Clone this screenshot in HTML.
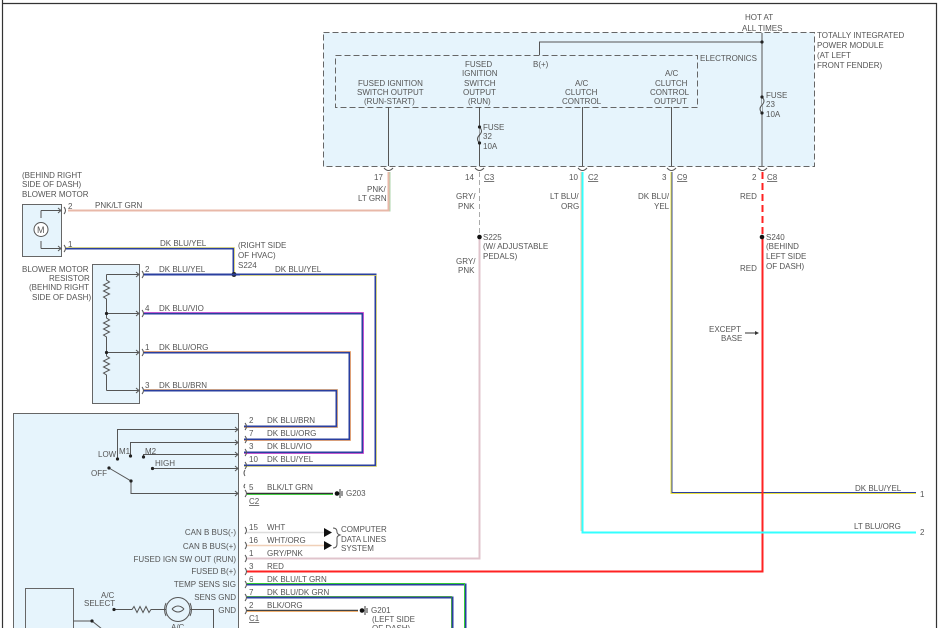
<!DOCTYPE html>
<html><head><meta charset="utf-8"><style>
html,body{margin:0;padding:0;background:#fff;}
svg{display:block;}
text{font-family:"Liberation Sans",sans-serif;font-size:8px;fill:#555;}
</style></head><body>
<svg width="941" height="628" viewBox="0 0 941 628" xmlns="http://www.w3.org/2000/svg">
<path d="M2.5 0V628M2.5 3.5H936.5V628" stroke="#333" stroke-width="1.2" fill="none"/>

<rect x="323.5" y="32.5" width="491" height="134" fill="#e6f4fc" stroke="#666" stroke-dasharray="6,3"/>
<rect x="335.5" y="55.5" width="362" height="52" fill="none" stroke="#666" stroke-dasharray="6,3"/>
<text x="745" y="20">HOT AT</text>
<text x="742" y="31">ALL TIMES</text>
<text x="817" y="38">TOTALLY INTEGRATED</text>
<text x="817" y="48">POWER MODULE</text>
<text x="817" y="58">(AT LEFT</text>
<text x="817" y="68">FRONT FENDER)</text>
<text x="700" y="61">ELECTRONICS</text>
<text x="358" y="86">FUSED IGNITION</text>
<text x="357" y="95">SWITCH OUTPUT</text>
<text x="364" y="104">(RUN-START)</text>
<text x="465" y="67">FUSED</text>
<text x="462" y="76">IGNITION</text>
<text x="464" y="86">SWITCH</text>
<text x="463" y="95">OUTPUT</text>
<text x="468" y="104">(RUN)</text>
<text x="533" y="67">B(+)</text>
<text x="575" y="86">A/C</text>
<text x="565" y="95">CLUTCH</text>
<text x="562" y="104">CONTROL</text>
<text x="665" y="76">A/C</text>
<text x="655" y="86">CLUTCH</text>
<text x="650" y="95">CONTROL</text>
<text x="654" y="104">OUTPUT</text>
<g stroke="#555" fill="none">
<path d="M762 33V166M762 42H539.5V55M388.5 107V166M479.5 107V166M582.5 107V166M671.5 107V166"/>
<path d="M762 97q4 4 0 8q-4 4 0 8" fill="#e6f4fc"/>
<path d="M479.5 127q4 4 0 8q-4 4 0 8" fill="#e6f4fc"/>
</g>
<g fill="#222"><circle cx="762" cy="42" r="1.6"/><circle cx="762" cy="97" r="1.6"/><circle cx="762" cy="113" r="1.6"/><circle cx="479.5" cy="127" r="1.6"/><circle cx="479.5" cy="143" r="1.6"/></g>
<text x="766" y="98">FUSE</text><text x="766" y="107">23</text><text x="766" y="117">10A</text>
<text x="483" y="130">FUSE</text><text x="483" y="139">32</text><text x="483" y="149">10A</text>
<g stroke="#555" fill="none">
<path d="M384 168q4.5 5 9 0M475 168q4.5 5 9 0M578 168q4.5 5 9 0M667 168q4.5 5 9 0M758 168q4.5 5 9 0"/>
</g>
<text x="374" y="180">17</text><text x="465" y="180">14</text><text x="484" y="180" text-decoration="underline">C3</text>
<text x="569" y="180">10</text><text x="588" y="180" text-decoration="underline">C2</text>
<text x="662" y="180">3</text><text x="677" y="180" text-decoration="underline">C9</text>
<text x="752" y="180">2</text><text x="767" y="180" text-decoration="underline">C8</text>
<text x="367" y="192">PNK/</text><text x="358" y="201">LT GRN</text>
<text x="456" y="199">GRY/</text><text x="458" y="209">PNK</text>
<text x="550" y="199">LT BLU/</text><text x="561" y="209">ORG</text>
<text x="638" y="199">DK BLU/</text><text x="654" y="209">YEL</text>
<text x="740" y="199">RED</text>

<path d="M388.5 172V210.5H68" stroke="#e8b8a8" stroke-width="2" fill="none"/>
<path d="M390 172V211.5" stroke="#9c9" stroke-width="0.8"/>
<text x="95" y="208">PNK/LT GRN</text>

<text x="22" y="178">(BEHIND RIGHT</text><text x="22" y="187">SIDE OF DASH)</text><text x="22" y="197">BLOWER MOTOR</text>
<rect x="22.5" y="204.5" width="39" height="52" fill="#e6f4fc" stroke="#666"/>
<g stroke="#555" fill="none"><path d="M41 210.5V218M41 241V248.5M41 210.5H60M41 248.5H60M58 208l3 2.5-3 2.5M58 246l3 2.5-3 2.5M64 207q3 3.5 0 7M64 245q3 3.5 0 7"/>
<circle cx="41" cy="229.5" r="7" fill="#fff"/></g>
<text x="37" y="233" style="font-size:9px">M</text>
<text x="68" y="209">2</text><text x="68" y="247">1</text>

<path d="M66 248.5H233.5V274" stroke="#2a3f9f" stroke-width="2" fill="none"/>
<path d="M66 247.5H234.5V274" stroke="#e8e070" stroke-width="0.8" fill="none"/>
<text x="160" y="246">DK BLU/YEL</text>
<text x="238" y="248">(RIGHT SIDE</text><text x="238" y="258">OF HVAC)</text><text x="238" y="268">S224</text>

<text x="22" y="272">BLOWER MOTOR</text><text x="49" y="281">RESISTOR</text><text x="29" y="290">(BEHIND RIGHT</text><text x="32" y="300">SIDE OF DASH)</text>
<rect x="92.5" y="264.5" width="47" height="139" fill="#e6f4fc" stroke="#666"/>
<g stroke="#555" fill="none">
<path d="M106.5 274.5V280l3 2-6 3 6 3-6 3 6 3-6 3 3 2V318l3 2-6 3 6 3-6 3 6 3-6 3 3 2V356l3 2-6 3 6 3-6 3 6 3-6 3 3 2V390.5"/>
<path d="M106.5 274.5H138M106.5 313.5H138M106.5 352.5H138M106.5 390.5H138"/>
<path d="M136 272l3 2.5-3 2.5M136 311l3 2.5-3 2.5M136 350l3 2.5-3 2.5M136 388l3 2.5-3 2.5"/>
<path d="M142 271q3 3.5 0 7M142 310q3 3.5 0 7M142 349q3 3.5 0 7M142 387q3 3.5 0 7"/>
</g>
<g fill="#222"><circle cx="106.5" cy="313.5" r="1.6"/><circle cx="106.5" cy="352.5" r="1.6"/><circle cx="234" cy="274.5" r="2.5"/></g>
<text x="145" y="272">2</text><text x="145" y="311">4</text><text x="145" y="350">1</text><text x="145" y="388">3</text>
<text x="159" y="272">DK BLU/YEL</text><text x="159" y="311">DK BLU/VIO</text><text x="159" y="350">DK BLU/ORG</text><text x="159" y="388">DK BLU/BRN</text>
<text x="275" y="272">DK BLU/YEL</text>

<g fill="none" stroke="#2a3f9f" stroke-width="2">
<path d="M144 274.5H375.5V465.5H244"/>
<path d="M144 313.5H362.5V452.5H244"/>
<path d="M144 352.5H349.5V439.5H244"/>
<path d="M144 390.5H336.5V426.5H244"/>
</g>
<g fill="none" stroke-width="0.8">
<path d="M240 275.5H376.5V466.5H244" stroke="#e8e070"/>
<path d="M144 312.5H363.5V453.5H244" stroke="#d040d0"/>
<path d="M144 351.5H350.5V440.5H244" stroke="#f0a060"/>
<path d="M144 389.5H337.5V427.5H244" stroke="#d8a070"/>
</g>

<rect x="13.5" y="413.5" width="225" height="220" fill="#e6f4fc" stroke="#666"/>
<g stroke="#555" fill="none">
<path d="M117.5 459V429.5H238M130.5 456V442.5H238M143.5 457V454.5H238M152.5 468.5H238M109 468l22 13V493.5H238"/>
<path d="M235 427l3 2.5-3 2.5M235 440l3 2.5-3 2.5M235 452l3 2.5-3 2.5M235 466l3 2.5-3 2.5M235 491l3 2.5-3 2.5"/>
<path d="M245 423q3 3.5 0 7M245 436q3 3.5 0 7M245 449q3 3.5 0 7M245 462q3 3.5 0 7M245 490q3 3.5 0 7M245 470q-2 3 0 6M245 484q-2 3 0 4"/>
<path d="M245 527q3 3.5 0 7M245 542q3 3.5 0 7M245 555q3 3.5 0 7M245 568q3 3.5 0 7M245 581q3 3.5 0 7M245 594q3 3.5 0 7M245 607q3 3.5 0 7"/>
</g>
<g fill="#222"><circle cx="117.5" cy="459" r="1.6"/><circle cx="130.5" cy="456" r="1.6"/><circle cx="143.5" cy="457" r="1.6"/><circle cx="152.5" cy="468.5" r="1.6"/><circle cx="109" cy="468" r="1.6"/><circle cx="131" cy="481" r="1.6"/></g>
<text x="98" y="457">LOW</text><text x="119" y="454">M1</text><text x="145" y="454">M2</text><text x="155" y="466">HIGH</text><text x="91" y="476">OFF</text>

<text x="249" y="423">2</text><text x="249" y="436">7</text><text x="249" y="449">3</text><text x="249" y="462">10</text><text x="249" y="490">5</text>
<text x="267" y="423">DK BLU/BRN</text><text x="267" y="436">DK BLU/ORG</text><text x="267" y="449">DK BLU/VIO</text><text x="267" y="462">DK BLU/YEL</text><text x="267" y="490">BLK/LT GRN</text>
<text x="249" y="504" text-decoration="underline">C2</text>
<path d="M247 493.5H333" stroke="#333" stroke-width="1.5"/>
<path d="M247 494.5H333" stroke="#4c4" stroke-width="1"/>
<circle cx="337" cy="493.5" r="2.3" fill="#111"/><path d="M340 489v9M342 491v5" stroke="#333"/>
<text x="346" y="496">G203</text>

<text x="236" y="535" text-anchor="end">CAN B BUS(-)</text>
<text x="236" y="549" text-anchor="end">CAN B BUS(+)</text>
<text x="236" y="562" text-anchor="end">FUSED IGN SW OUT (RUN)</text>
<text x="236" y="574" text-anchor="end">FUSED B(+)</text>
<text x="236" y="587" text-anchor="end">TEMP SENS SIG</text>
<text x="236" y="600" text-anchor="end">SENS GND</text>
<text x="236" y="613" text-anchor="end">GND</text>
<text x="249" y="530">15</text><text x="249" y="543">16</text><text x="249" y="556">1</text><text x="249" y="569">3</text><text x="249" y="582">6</text><text x="249" y="595">7</text><text x="249" y="608">2</text>
<text x="267" y="530">WHT</text><text x="267" y="543">WHT/ORG</text><text x="267" y="556">GRY/PNK</text><text x="267" y="569">RED</text><text x="267" y="582">DK BLU/LT GRN</text><text x="267" y="595">DK BLU/DK GRN</text><text x="267" y="608">BLK/ORG</text>
<text x="249" y="621" text-decoration="underline">C1</text>
<path d="M247 532.5H324" stroke="#ddd" stroke-width="1.5"/>
<path d="M247 545.5H324" stroke="#f0d0b8" stroke-width="1.5"/>
<path d="M324 528l8 4.5-8 4.5zM324 541l8 4.5-8 4.5z" fill="#111"/>
<path d="M333 528q4 0 4 4q0 2 3 3q-3 1-3 3v6q0 4-4 4" stroke="#555" fill="none"/>
<text x="341" y="532">COMPUTER</text><text x="341" y="542">DATA LINES</text><text x="341" y="551">SYSTEM</text>

<path d="M479.5 172V237" stroke="#aaa" stroke-dasharray="5,3" fill="none"/>
<path d="M247 558.5H479.5V237" stroke="#e0c4cc" stroke-width="2" fill="none"/>
<circle cx="479.5" cy="237" r="2.3" fill="#111"/>
<text x="483" y="240">S225</text><text x="483" y="249">(W/ ADJUSTABLE</text><text x="483" y="259">PEDALS)</text>
<text x="456" y="264">GRY/</text><text x="458" y="273">PNK</text>

<path d="M762.5 172V237" stroke="#f22" stroke-width="2" stroke-dasharray="7,4" fill="none"/>
<path d="M247 571.5H762.5V237" stroke="#f22" stroke-width="2" fill="none"/>
<circle cx="762" cy="237" r="2.3" fill="#111"/>
<text x="766" y="240">S240</text><text x="766" y="249">(BEHIND</text><text x="766" y="259">LEFT SIDE</text><text x="766" y="269">OF DASH)</text>
<text x="740" y="271">RED</text>
<text x="709" y="332">EXCEPT</text><text x="721" y="341">BASE</text>
<path d="M745 333H757" stroke="#333"/><path d="M755 331l4 2-4 2z" fill="#333"/>

<path d="M582.5 172V532.5H916" stroke="#3ff" stroke-width="2" fill="none"/>
<path d="M581 172V531" stroke="#f0b080" stroke-width="0.7"/>
<text x="854" y="529">LT BLU/ORG</text><text x="920" y="535">2</text>
<path d="M671.5 172V493H916" stroke="#e8e040" stroke-width="2" fill="none"/>
<path d="M672 172V492.5H916" stroke="#2a3f9f" stroke-width="0.9" fill="none"/>
<text x="855" y="491">DK BLU/YEL</text><text x="920" y="497">1</text>
<path d="M762.5 480V500" stroke="#f22" stroke-width="2"/>

<path d="M247 584.5H465.5V628" stroke="#2a3f9f" stroke-width="2" fill="none"/>
<path d="M247 583.5H464.5V628" stroke="#3c3" stroke-width="1" fill="none"/>
<path d="M247 597.5H452.5V628" stroke="#2a3f9f" stroke-width="2" fill="none"/>
<path d="M247 596.5H451.5V628" stroke="#393" stroke-width="0.8" fill="none"/>
<path d="M247 610.5H358" stroke="#444" stroke-width="1.5"/>
<path d="M247 611.5H358" stroke="#f0b070" stroke-width="1"/>
<circle cx="362" cy="610.5" r="2.3" fill="#111"/><path d="M365 606v9M367 608v5" stroke="#333"/>
<text x="371" y="613">G201</text><text x="372" y="622">(LEFT SIDE</text><text x="372" y="631">OF DASH)</text>

<rect x="25.5" y="588.5" width="48" height="45" fill="#e6f4fc" stroke="#666"/>
<text x="101" y="598">A/C</text><text x="84" y="606">SELECT</text>
<g stroke="#555" fill="none">
<path d="M114 609.5H132l2-3 3 6 3-6 3 6 3-6 3 6 2-3H166M190 609.5H213.5V628M73 621H92l10 8"/>
<circle cx="178" cy="609.5" r="12"/>
<path d="M166 603q-3 6.5 0 13M190 603q3 6.5 0 13M172 609q6-6 12 0M172 609q6 6 12 0"/>
</g>
<circle cx="114" cy="609.5" r="1.6" fill="#222"/><circle cx="92" cy="621" r="1.6" fill="#222"/>
<text x="171" y="630">A/C</text>
</svg>
</body></html>
